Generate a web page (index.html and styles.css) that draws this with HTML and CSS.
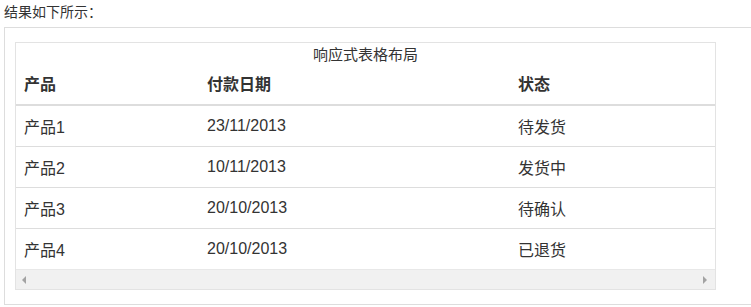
FILE: index.html
```html
<!DOCTYPE html>
<html lang="zh">
<head>
<meta charset="utf-8">
<title>响应式表格布局</title>
<link rel="stylesheet" href="styles.css">
</head>
<body>
<p class="intro">结果如下所示：</p>
<div class="example">
  <div class="table-responsive">
    <table class="table">
      <caption>响应式表格布局</caption>
      <thead>
        <tr><th class="c1">产品</th><th class="c2">付款日期</th><th class="c3">状态</th></tr>
      </thead>
      <tbody>
        <tr><td>产品1</td><td>23/11/2013</td><td>待发货</td></tr>
        <tr><td>产品2</td><td>10/11/2013</td><td>发货中</td></tr>
        <tr><td>产品3</td><td>20/10/2013</td><td>待确认</td></tr>
        <tr><td>产品4</td><td>20/10/2013</td><td>已退货</td></tr>
      </tbody>
    </table>
    <div class="scrollbar">
      <span class="arrow left"></span>
      <span class="arrow right"></span>
    </div>
  </div>
</div>
</body>
</html>
```
FILE: styles.css
```css
html, body {
  margin: 0;
  padding: 0;
  overflow: hidden;
  background: #fff;
}
body {
  font-family: "Liberation Sans", Arial, "Noto Sans CJK SC", sans-serif;
  font-size: 16px;
  color: #333;
  padding-left: 4px;
}
.intro {
  margin: 0;
  height: 27px;
  line-height: 27px;
  font-size: 14px;
  margin-top: -1px;
  margin-bottom: 1px;
}
.example {
  width: 736px;
  border: 1px solid #ddd;
  border-right: none;
  padding: 14px 0 16px 10px;
  height: 246px;
}
.table-responsive {
  width: 699px;
  border: 1px solid #e3e3e3;
}
.table {
  width: 100%;
  border-collapse: collapse;
  border-spacing: 0;
}
.table caption {
  height: 23px;
  line-height: 23px;
  text-align: center;
  color: #333;
  padding: 0;
  font-size: 15px;
}
.table th, .table td {
  text-align: left;
  padding: 0 0 0 8px;
  vertical-align: middle;
}
.table th {
  height: 38px;
  font-weight: bold;
  border-bottom: 2px solid #ddd;
  line-height: 38px;
}
.table td {
  height: 40px;
  border-top: 1px solid #ddd;
}
.table tbody tr:first-child td {
  border-top: none;
}
.c1 { width: 175px; }
.c2 { width: 303px; }
.scrollbar {
  height: 19px;
  background: #f1f1f1;
  border-top: 1px solid #e8e8e8;
  display: flex;
  align-items: center;
  justify-content: space-between;
  padding: 0 8px 0 6px;
}
.arrow {
  width: 0;
  height: 0;
  border-top: 4px solid transparent;
  border-bottom: 4px solid transparent;
}
.arrow.left { border-right: 4px solid #a3a3a3; }
.arrow.right { border-left: 4px solid #a3a3a3; }
```
